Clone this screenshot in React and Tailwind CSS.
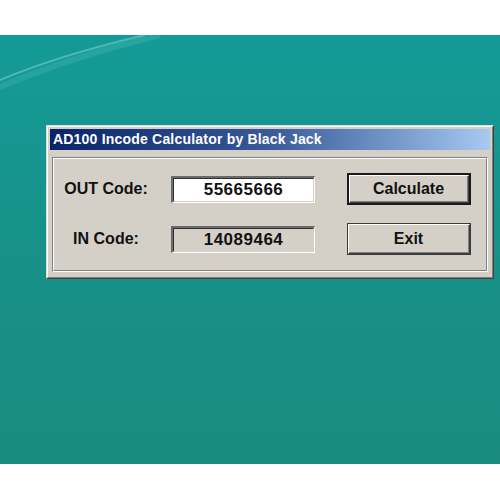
import React from "react";

function Field({ value, white }) {
  return (
    <div className="h-[27px] w-[144px] border-t-2 border-l-2 border-t-[#6a6a6a] border-l-[#6a6a6a] border-b border-r border-b-[#ffffff] border-r-[#ffffff]">
      <div
        className={
          "flex h-full w-full items-center justify-center border-t border-l border-t-[#303030] border-l-[#303030] border-b border-r border-b-[#d4d0c8] border-r-[#d4d0c8] pt-[1px] text-[17px] font-bold tracking-[0.5px] text-[#111] " +
          (white ? "bg-white" : "bg-[#d4d0c8]")
        }
      >
        {value}
      </div>
    </div>
  );
}

function Button({ label, isDefault }) {
  const inner = (
    <div className="flex h-full w-full items-center justify-center border-t border-l border-t-white border-l-white border-b border-r border-b-[#404040] border-r-[#404040]">
      <div className="flex h-full w-full items-center justify-center border-b border-r border-b-[#808080] border-r-[#808080] text-[16px] font-bold text-[#111]">
        {label}
      </div>
    </div>
  );
  return (
    <div
      className={
        "h-[32px] w-[124px] bg-[#d4d0c8] " +
        (isDefault ? "border-2 border-[#1a1a1a]" : "border border-[#3a3a3a]")
      }
    >
      {inner}
    </div>
  );
}

export default function App() {
  return (
    <div className="h-[500px] w-[500px] bg-white font-['Liberation_Sans',Arial,sans-serif]">
      <div className="h-[35px] bg-white" />
      <div className="relative h-[429px] w-full overflow-hidden bg-gradient-to-b from-[#149b97] via-[#179189] to-[#198c7e]">
        <svg
          className="absolute left-0 top-0"
          width="500"
          height="120"
          viewBox="0 0 500 120"
        >
          <path
            d="M0 45 Q 60 20 145 0"
            stroke="#7fd0d0"
            strokeOpacity="0.55"
            strokeWidth="2"
            fill="none"
          />
          <path
            d="M0 52 Q 70 22 160 0"
            stroke="#5cc2c0"
            strokeOpacity="0.25"
            strokeWidth="6"
            fill="none"
          />
        </svg>
        <div className="relative ml-[46px] mt-[90px] w-[448px] border border-t-[#e0ddd6] border-l-[#e0ddd6] border-b-[#404040] border-r-[#404040] bg-[#d4d0c8]">
          <div className="border border-t-white border-l-white border-b-[#808080] border-r-[#808080] p-[2px]">
            <div className="flex h-[21px] items-center bg-gradient-to-r from-[#0a246a] via-[#3a5a9a] to-[#a6caf0] pl-[3px] text-[14px] font-bold tracking-[0.2px] text-white">
              AD100 Incode Calculator by Black Jack
            </div>
            <div className="px-[2px] pb-[3px] pt-[7px]">
              <div className="border border-t-[#808080] border-l-[#808080] border-b-white border-r-white">
                <div className="flex flex-col gap-[18px] border border-t-white border-l-white border-b-[#808080] border-r-[#808080] pb-[15px] pt-[14px]">
                  <div className="flex items-center">
                    <div className="w-[104px] text-center text-[16px] font-bold text-[#111]">
                      OUT Code:
                    </div>
                    <div className="ml-[13px]">
                      <Field value="55665666" white />
                    </div>
                    <div className="ml-[32px]">
                      <Button label="Calculate" isDefault />
                    </div>
                  </div>
                  <div className="flex items-center">
                    <div className="w-[104px] text-center text-[16px] font-bold text-[#111]">
                      IN Code:
                    </div>
                    <div className="ml-[13px]">
                      <Field value="14089464" />
                    </div>
                    <div className="ml-[32px]">
                      <Button label="Exit" />
                    </div>
                  </div>
                </div>
              </div>
            </div>
          </div>
        </div>
      </div>
      <div className="h-[36px] bg-white" />
    </div>
  );
}
